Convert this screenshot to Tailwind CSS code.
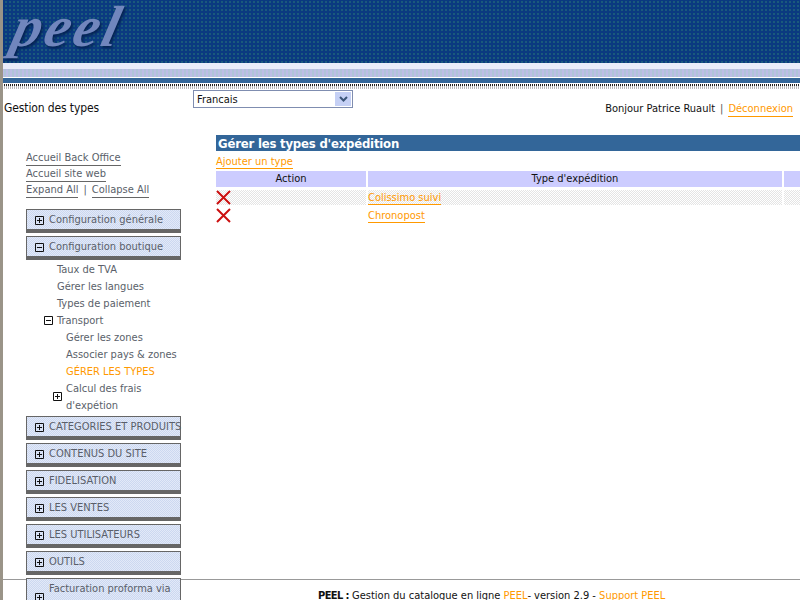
<!DOCTYPE html>
<html lang="fr">
<head>
  <meta charset="UTF-8">
  <title>Gestion des types</title>
  <script src="https://cdn.jsdelivr.net/npm/@tailwindcss/browser@4"></script>
</head>
<body class="bg-white">
  <div class="relative h-[600px] w-[800px] overflow-hidden bg-white font-['DejaVu_Sans_Condensed','DejaVu_Sans',sans-serif] text-[11px] leading-[16px] text-[#111]">
    <!-- left strip -->
    <div class="absolute left-0 top-0 z-10 h-[600px] w-[3px] bg-[#9a9488]"></div>

    <!-- header bands -->
    <div class="h-[63px] bg-[#0b3a80] bg-[image:radial-gradient(#1a5a7c_1px,transparent_1px)] bg-[length:4px_4px] pl-[14px]">
      <span class="block w-fit -skew-x-[14deg] font-['Liberation_Serif',serif] text-[58px] font-bold italic leading-[54px] tracking-[3px] text-[#7186bd] [text-shadow:2px_2px_3px_#04204f]">peel</span>
    </div>
    <div class="h-[6px] bg-[#e9ecfa]"></div>
    <div class="h-[8px] bg-[image:repeating-linear-gradient(90deg,#b0c4d8_0_2px,#bdbde6_2px_4px)]"></div>
    <div class="h-px bg-white"></div>
    <div class="h-[5px] bg-[#336699]"></div>
    <div class="h-px bg-white"></div>
    <div class="h-[2px] bg-[image:repeating-linear-gradient(90deg,#222_0_1px,#fff_1px_2px)]"></div>
    <div class="h-[3px] bg-[image:repeating-linear-gradient(90deg,#bbb_0_1px,#fff_1px_2px)]"></div>

    <!-- top row -->
    <div class="relative h-[46px]">
      <div class="absolute left-[4px] top-[11px] text-[12px] tracking-[-0.12px]">Gestion des types</div>
      <div class="absolute left-[193px] top-[1px] flex h-[18px] w-[160px] items-center justify-between border border-[#7f8db0] pl-[3px] pr-px">
        <span class="pt-[1px]">Francais</span>
        <span class="flex h-[14px] w-[16px] items-center justify-center bg-[#c5d0f5]">
          <svg width="9" height="7" viewBox="0 0 9 7" fill="none" stroke="#3b5578" stroke-width="2"><path d="M1 1l3.500 3.500L8 1"/></svg>
        </span>
      </div>
      <div class="absolute right-[7px] top-[12px] flex gap-[5px]">
        <span>Bonjour Patrice Ruault</span><span class="text-[#555]">|</span>
        <a class="border-b border-[#f90] leading-[15px] text-[#f90]" href="#">Déconnexion</a>
      </div>
    </div>

    <div class="flex">
      <!-- sidebar -->
      <aside class="ml-[26px] w-[155px] shrink-0 pt-[15px] text-[#5a5f6a]">
        <div class="flex h-[16px] items-center"><a class="border-b border-[#666] leading-[14px]" href="#">Accueil Back Office</a></div>
        <div class="flex h-[16px] items-center"><a class="border-b border-[#666] leading-[14px]" href="#">Accueil site web</a></div>
        <div class="flex h-[16px] items-center gap-[5px]"><a class="border-b border-[#666] leading-[14px]" href="#">Expand All</a><span>|</span><a class="border-b border-[#666] leading-[14px]" href="#">Collapse All</a></div>

        <div class="mt-[11px] flex flex-col">
          <div class="mb-[3px] flex h-[24px] items-center gap-[5px] border border-b-[4px] border-[#666] bg-[image:repeating-conic-gradient(#ccd8f0_0_25%,#e2e9f8_0_50%)] bg-[length:2px_2px] pl-2">
            <svg class="mt-[2px] shrink-0" width="9" height="9" viewBox="0 0 9 9" fill="none" stroke="#111"><path d="M.500.500h8v8h-8zM2 4.500h5M4.500 2v5"/></svg>
            <span>Configuration générale</span>
          </div>
          <div class="flex h-[24px] items-center gap-[5px] border border-b-[4px] border-[#666] bg-[image:repeating-conic-gradient(#ccd8f0_0_25%,#e2e9f8_0_50%)] bg-[length:2px_2px] pl-2">
            <svg class="mt-[2px] shrink-0" width="9" height="9" viewBox="0 0 9 9" fill="none" stroke="#111"><path d="M.500.500h8v8h-8zM2 4.500h5"/></svg>
            <span class="pt-[1px]">Configuration boutique</span>
          </div>

          <!-- open submenu -->
          <div class="pb-[2px] pt-[1px] leading-[17px]">
            <div class="pl-[31px]">Taux de TVA</div>
            <div class="pl-[31px]">Gérer les langues</div>
            <div class="pl-[31px]">Types de paiement</div>
            <div class="flex items-center gap-[4px] pl-[18px]">
              <svg class="shrink-0" width="9" height="9" viewBox="0 0 9 9" fill="none" stroke="#111"><path d="M.500.500h8v8h-8zM2 4.500h5"/></svg>
              <span>Transport</span>
            </div>
            <div class="pl-[40px]">Gérer les zones</div>
            <div class="whitespace-nowrap pl-[40px]">Associer pays &amp; zones</div>
            <div class="pl-[40px] text-[#f90]">GÉRER LES TYPES</div>
            <div class="flex items-center gap-[4px] pl-[27px]">
              <svg class="-mt-[1px] shrink-0" width="9" height="9" viewBox="0 0 9 9" fill="none" stroke="#111"><path d="M.500.500h8v8h-8zM2 4.500h5M4.500 2v5"/></svg>
              <span>Calcul des frais<br>d'expétion</span>
            </div>
          </div>

          <div class="mb-[3px] flex h-[24px] items-center gap-[5px] border border-b-[4px] border-[#666] bg-[image:repeating-conic-gradient(#ccd8f0_0_25%,#e2e9f8_0_50%)] bg-[length:2px_2px] pl-2">
            <svg class="mt-[2px] shrink-0" width="9" height="9" viewBox="0 0 9 9" fill="none" stroke="#111"><path d="M.500.500h8v8h-8zM2 4.500h5M4.500 2v5"/></svg>
            <span class="whitespace-nowrap pt-[1px]">CATEGORIES ET PRODUITS</span>
          </div>
          <div class="mb-[3px] flex h-[24px] items-center gap-[5px] border border-b-[4px] border-[#666] bg-[image:repeating-conic-gradient(#ccd8f0_0_25%,#e2e9f8_0_50%)] bg-[length:2px_2px] pl-2">
            <svg class="mt-[2px] shrink-0" width="9" height="9" viewBox="0 0 9 9" fill="none" stroke="#111"><path d="M.500.500h8v8h-8zM2 4.500h5M4.500 2v5"/></svg>
            <span class="pt-[1px]">CONTENUS DU SITE</span>
          </div>
          <div class="mb-[3px] flex h-[24px] items-center gap-[5px] border border-b-[4px] border-[#666] bg-[image:repeating-conic-gradient(#ccd8f0_0_25%,#e2e9f8_0_50%)] bg-[length:2px_2px] pl-2">
            <svg class="mt-[2px] shrink-0" width="9" height="9" viewBox="0 0 9 9" fill="none" stroke="#111"><path d="M.500.500h8v8h-8zM2 4.500h5M4.500 2v5"/></svg>
            <span class="pt-[1px]">FIDELISATION</span>
          </div>
          <div class="mb-[3px] flex h-[24px] items-center gap-[5px] border border-b-[4px] border-[#666] bg-[image:repeating-conic-gradient(#ccd8f0_0_25%,#e2e9f8_0_50%)] bg-[length:2px_2px] pl-2">
            <svg class="mt-[2px] shrink-0" width="9" height="9" viewBox="0 0 9 9" fill="none" stroke="#111"><path d="M.500.500h8v8h-8zM2 4.500h5M4.500 2v5"/></svg>
            <span class="pt-[1px]">LES VENTES</span>
          </div>
          <div class="mb-[3px] flex h-[24px] items-center gap-[5px] border border-b-[4px] border-[#666] bg-[image:repeating-conic-gradient(#ccd8f0_0_25%,#e2e9f8_0_50%)] bg-[length:2px_2px] pl-2">
            <svg class="mt-[2px] shrink-0" width="9" height="9" viewBox="0 0 9 9" fill="none" stroke="#111"><path d="M.500.500h8v8h-8zM2 4.500h5M4.500 2v5"/></svg>
            <span class="pt-[1px]">LES UTILISATEURS</span>
          </div>
          <div class="mb-[3px] flex h-[24px] items-center gap-[5px] border border-b-[4px] border-[#666] bg-[image:repeating-conic-gradient(#ccd8f0_0_25%,#e2e9f8_0_50%)] bg-[length:2px_2px] pl-2">
            <svg class="mt-[2px] shrink-0" width="9" height="9" viewBox="0 0 9 9" fill="none" stroke="#111"><path d="M.500.500h8v8h-8zM2 4.500h5M4.500 2v5"/></svg>
            <span class="pt-[1px]">OUTILS</span>
          </div>
          <div class="relative z-10 flex h-[40px] items-center gap-[5px] border border-b-[4px] border-[#666] bg-[image:repeating-conic-gradient(#ccd8f0_0_25%,#e2e9f8_0_50%)] bg-[length:2px_2px] pl-2">
            <svg class="mt-[2px] shrink-0" width="9" height="9" viewBox="0 0 9 9" fill="none" stroke="#111"><path d="M.500.500h8v8h-8zM2 4.500h5M4.500 2v5"/></svg>
            <span class="mt-[2px] self-start whitespace-nowrap">Facturation proforma via</span>
          </div>
        </div>
      </aside>

      <!-- main -->
      <main class="ml-[35px] flex-1">
        <h1 class="h-[16px] bg-[#336699] pl-[2px] text-[13px] font-bold leading-[17px] tracking-[-0.2px] text-white">Gérer les types d'expédition</h1>
        <div class="mt-[3px] h-[17px]"><a class="border-b border-[#f90] leading-[14px] text-[#f90]" href="#">Ajouter un type</a></div>
        <div class="grid grid-cols-[150px_414px_16px] gap-x-[2px]">
          <div class="h-[16px] bg-[#ccccff] text-center">Action</div>
          <div class="h-[16px] bg-[#ccccff] text-center">Type d'expédition</div>
          <div class="h-[16px] bg-[#ccccff]"></div>

          <div class="mt-[3px] flex h-[15px] items-center bg-[image:repeating-conic-gradient(#e4e4e4_0_25%,#fff_0_50%)] bg-[length:2px_2px]">
            <svg width="15" height="15" viewBox="0 0 15 15" fill="none" stroke="#cc1010" stroke-width="2"><path d="M1 1l13 13M14 1L1 14"/></svg>
          </div>
          <div class="mt-[3px] h-[15px] bg-[image:repeating-conic-gradient(#e4e4e4_0_25%,#fff_0_50%)] bg-[length:2px_2px]"><a class="border-b border-[#f90] leading-[14px] text-[#f90]" href="#">Colissimo suivi</a></div>
          <div class="mt-[3px] h-[15px] bg-[image:repeating-conic-gradient(#e4e4e4_0_25%,#fff_0_50%)] bg-[length:2px_2px]"></div>

          <div class="mt-[3px] flex h-[15px] items-center">
            <svg width="15" height="15" viewBox="0 0 15 15" fill="none" stroke="#cc1010" stroke-width="2"><path d="M1 1l13 13M14 1L1 14"/></svg>
          </div>
          <div class="mt-[3px] h-[15px]"><a class="border-b border-[#f90] leading-[14px] text-[#f90]" href="#">Chronopost</a></div>
          <div class="mt-[3px] h-[15px]"></div>
        </div>
      </main>
    </div>

    <!-- footer, sits under the last sidebar box -->
    <div class="absolute inset-x-0 top-[579px] h-[21px] whitespace-nowrap border-t border-[#999] pl-[318px] pt-[8px]">
      <b class="font-bold tracking-[-0.6px]">PEEL :</b> Gestion du catalogue en ligne <span class="text-[#f90]">PEEL</span>- version 2.9 - <span class="text-[#f90]">Support PEEL</span>
    </div>
  </div>
</body>
</html>
